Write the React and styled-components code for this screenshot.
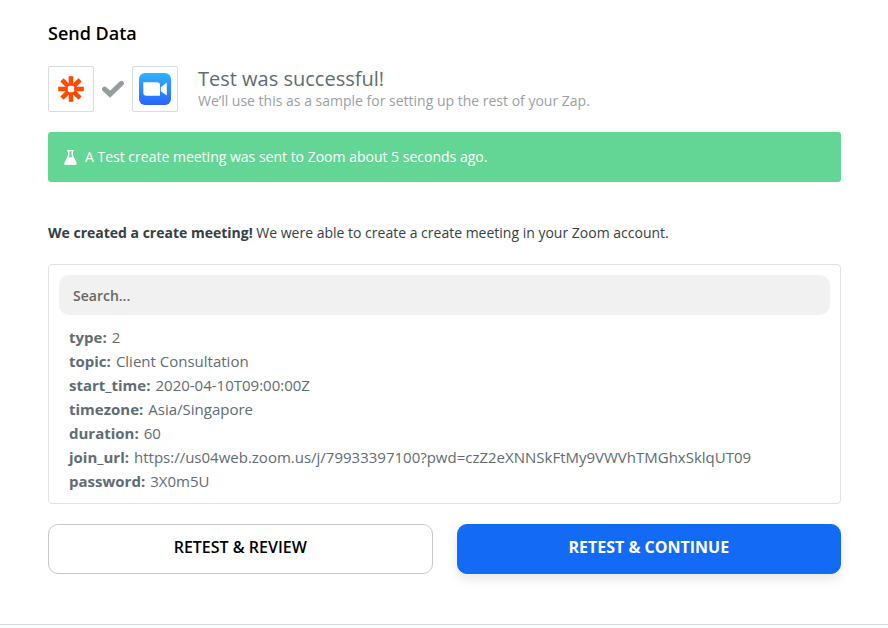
import React from 'react';
import styled, {createGlobalStyle} from 'styled-components';

const GlobalStyle = createGlobalStyle`
  *, *::before, *::after {
    box-sizing: border-box;
  }
  body {
    margin: 0;
    background: #fff;
    font-family: "Open Sans", "Noto Sans", sans-serif;
    font-size: 14px;
    line-height: 20px;
    color: #354044;
  }
`;

const Step = styled.main`
  padding: 20px 47px 50px 48px;
  border-bottom: 1px solid #d5dcdc;
`;
const StepTitle = styled.h1`
  margin: 0 0 20px;
  font-size: 18px;
  font-weight: 600;
  line-height: 26px;
  color: #000;
`;
const Summary = styled.header`
  display: flex;
  align-items: center;
  margin-bottom: 20px;
`;
const AppTile = styled.div`
  display: flex;
  align-items: center;
  justify-content: center;
  width: 46px;
  height: 46px;
  border: 1px solid #d8dddd;
  border-radius: 2px;
`;
const CheckIcon = styled.svg`
  width: 22px;
  height: 18px;
  margin: 0 8px;
`;
const SummaryText = styled.div`
  margin-left: 20px;
`;
const SummaryTitle = styled.h2`
  margin: 0;
  font-size: 20px;
  font-weight: 400;
  line-height: 24px;
  color: #5f6c72;
`;
const SummaryNote = styled.p`
  margin: 0;
  color: #999fa3;
`;
const Banner = styled.div`
  display: flex;
  align-items: center;
  gap: 8px;
  height: 50px;
  padding: 0 16px;
  border-radius: 3px;
  background: #63d696;
  color: #fff;
`;
const Message = styled.p`
  margin: 40px 0 20px;
  line-height: 22px;
`;
const Result = styled.section`
  padding: 10px;
  border: 1px solid #dfe3e6;
  border-radius: 4px;
`;
const Search = styled.input`
  display: block;
  width: 100%;
  height: 40px;
  padding: 0 14px;
  border: 0;
  border-radius: 10px;
  background: #f1f1f1;
  font: inherit;
  font-weight: 600;
  color: #666;
  &::placeholder {
    color: #666;
    opacity: 1;
  }
`;
const Fields = styled.dl`
  margin: 10px 10px 0;
  font-size: 15px;
  line-height: 24px;
  color: #5f6c72;
`;
const Field = styled.div`
  display: flex;
  gap: 5px;
`;
const FieldName = styled.dt`
  font-weight: 700;
`;
const FieldValue = styled.dd`
  margin: 0;
  min-width: 0;
  overflow-wrap: anywhere;
`;
const Actions = styled.div`
  display: grid;
  grid-template-columns: 1fr 1fr;
  gap: 24px;
  margin-top: 20px;
`;
const Button = styled.button`
  height: 50px;
  padding: 0 16px 4px;
  border: 1px solid ${props => props.$primary ? '#136bf5' : '#c8c8c8'};
  border-radius: 10px;
  background: ${props => props.$primary ? '#136bf5' : '#fff'};
  box-shadow: ${props => props.$primary ? '0 5px 12px rgba(0, 0, 0, 0.1)' : 'none'};
  font: inherit;
  font-size: 16px;
  font-weight: ${props => props.$primary ? 700 : 600};
  text-transform: uppercase;
  color: ${props => props.$primary ? '#fff' : '#000'};
  cursor: pointer;
`;

const ZapierLogo = () => (
  <svg width="26" height="26" viewBox="-13 -13 26 26" aria-hidden="true">
    {[0, 45, 90, 135, 180, 225, 270, 315].map(angle => (
      <path key={angle} d="M-2.3 -12.8H2.3V-3.2H-2.3Z" fill="#ff4a00" transform={`rotate(${angle})`} />
    ))}
    <circle r="5.8" fill="#ff4a00" />
    <rect x="-3.2" y="-3.2" width="6.4" height="6.4" rx="2" fill="#fff" />
  </svg>
);

const ZoomLogo = () => (
  <svg width="32" height="32" viewBox="0 0 32 32" aria-hidden="true">
    <defs>
      <linearGradient id="zoom" x1="0" y1="0" x2="0" y2="1">
        <stop offset="0" stopColor="#2fb4ff" />
        <stop offset="1" stopColor="#2a62ff" />
      </linearGradient>
    </defs>
    <rect width="32" height="32" rx="6" fill="url(#zoom)" />
    <path d="M4.3 9.2H18Q21 9.2 21 12V22.8H7.4Q4.3 22.8 4.3 19.8Z" fill="#fff" />
    <path d="M21.8 14.2L27.8 9.6V22.4L21.8 18.2Z" fill="#fff" />
  </svg>
);

const FlaskIcon = () => (
  <svg width="13" height="15" viewBox="0 0 13 15" aria-hidden="true">
    <path d="M3 .6H10M4.7 1V5.4L1 13.2Q.8 14 1.5 14H11.5Q12.2 14 12 13.2L8.3 5.4V1" fill="none" stroke="#fff" strokeWidth="1.4" />
    <path d="M3.7 7.2H9.3L12.4 14.4H.6Z" fill="#fff" />
  </svg>
);

const fields = [
  ['type', '2'],
  ['topic', 'Client Consultation'],
  ['start_time', '2020-04-10T09:00:00Z'],
  ['timezone', 'Asia/Singapore'],
  ['duration', '60'],
  ['join_url', 'https://us04web.zoom.us/j/79933397100?pwd=czZ2eXNNSkFtMy9VWVhTMGhxSklqUT09'],
  ['password', '3X0m5U'],
];

const App = () => (
  <>
    <GlobalStyle />
    <Step>
      <StepTitle>Send Data</StepTitle>
      <Summary>
        <AppTile><ZapierLogo /></AppTile>
        <CheckIcon viewBox="0 0 22 18" aria-hidden="true">
          <path d="M2.6 9.2L8 14.2L19.4 3.4" fill="none" stroke="#959c9e" strokeWidth="5" strokeLinecap="round" />
        </CheckIcon>
        <AppTile><ZoomLogo /></AppTile>
        <SummaryText>
          <SummaryTitle>Test was successful!</SummaryTitle>
          <SummaryNote>We’ll use this as a sample for setting up the rest of your Zap.</SummaryNote>
        </SummaryText>
      </Summary>
      <Banner>
        <FlaskIcon />
        <span>A Test create meeting was sent to Zoom about 5 seconds ago.</span>
      </Banner>
      <Message>
        <strong>We created a create meeting!</strong> We were able to create a create meeting in your Zoom account.
      </Message>
      <Result>
        <Search type="search" placeholder="Search..." aria-label="Search" />
        <Fields>
          {fields.map(([name, value]) => (
            <Field key={name}>
              <FieldName>{name}:</FieldName>
              <FieldValue>{value}</FieldValue>
            </Field>
          ))}
        </Fields>
      </Result>
      <Actions>
        <Button type="button">Retest &amp; Review</Button>
        <Button type="button" $primary>Retest &amp; Continue</Button>
      </Actions>
    </Step>
  </>
);

export default App;
